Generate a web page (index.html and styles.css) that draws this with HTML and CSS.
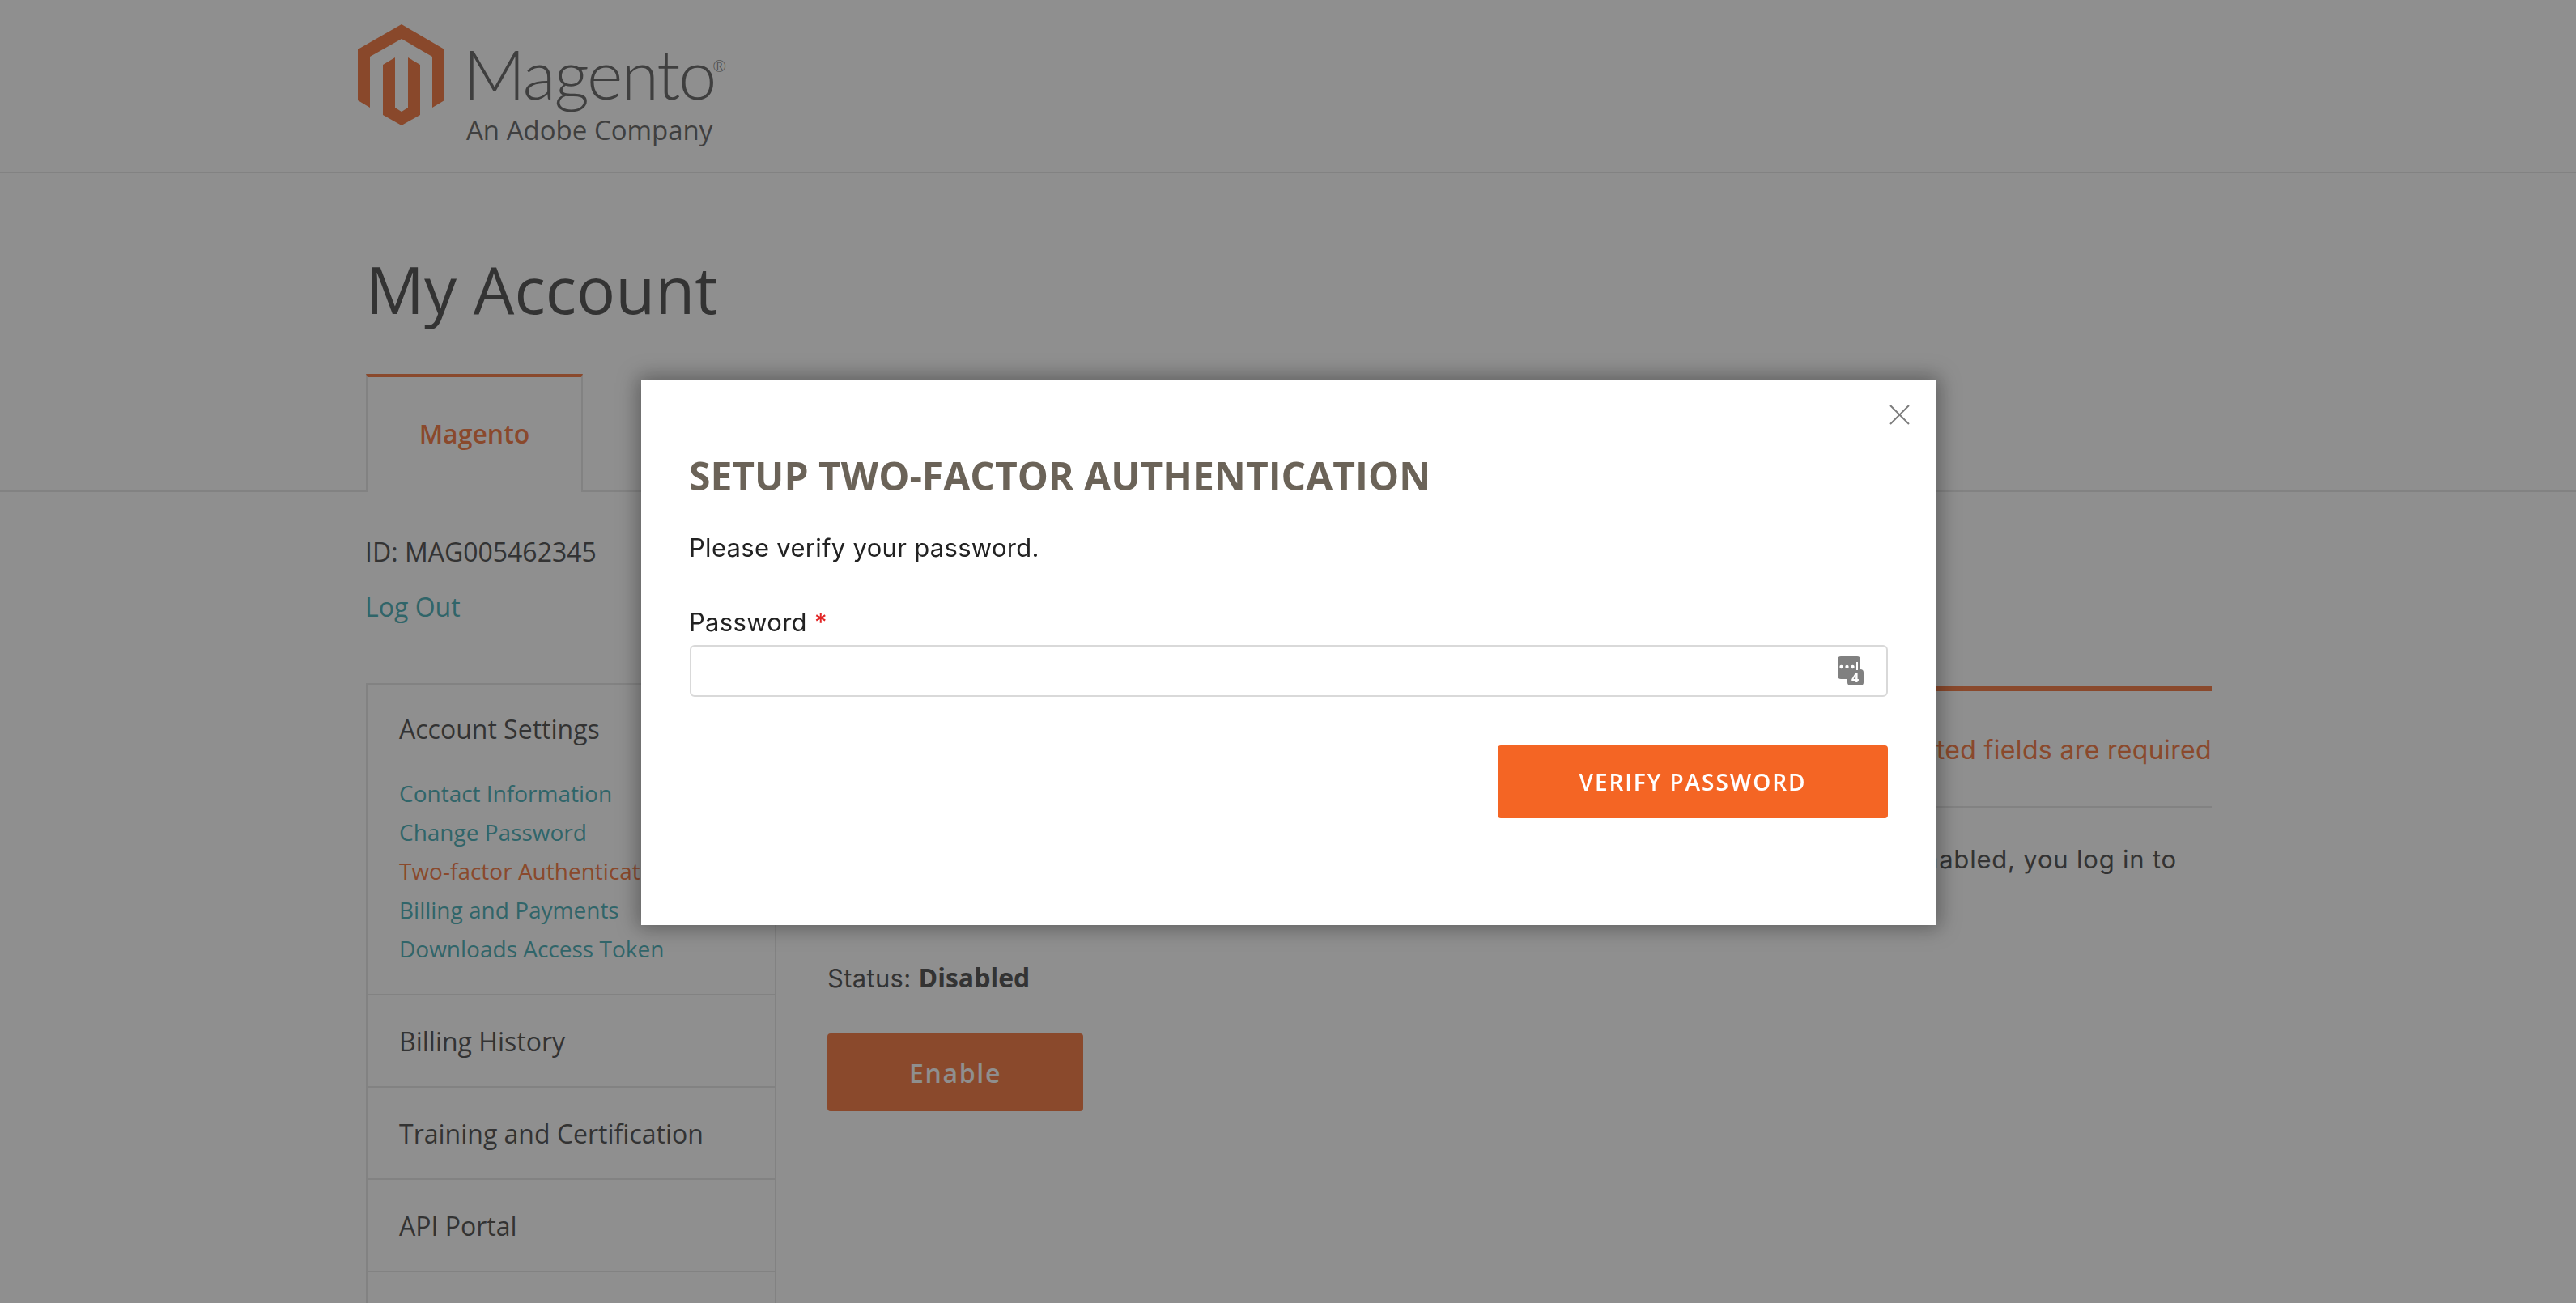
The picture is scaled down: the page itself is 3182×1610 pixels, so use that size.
FILE: index.html
```html
<!DOCTYPE html>
<html lang="en">
<head>
<meta charset="utf-8">
<title>My Account</title>
<link rel="stylesheet" href="styles.css">
</head>
<body>
<header class="site-header">
  <a class="logo" href="#">
    <svg class="logo-mark" width="107" height="125" viewBox="442 30 107 125" aria-hidden="true">
      <path class="mark" d="M496 30 549 61V124L534 133V70L496 48 457 70V133L442 124V61Z"/>
      <path class="mark" d="M488 71V133L496 138 504 133V71L519 80V142L496 155 473 142V80Z"/>
    </svg>
    <span class="logo-text">
      <span class="logo-name">Magento<sup class="logo-reg">®</sup></span>
      <span class="logo-sub">An Adobe Company</span>
    </span>
  </a>
</header>
<main>
  <h1 class="page-title">My Account</h1>
  <nav class="tabs"><a class="tab" href="#">Magento</a></nav>
  <div class="container">
    <p class="account-id">ID: MAG005462345</p>
    <a class="logout" href="#">Log Out</a>
    <div class="columns">
      <aside class="sidebar">
        <section class="side-group">
          <h2 class="side-heading">Account Settings</h2>
          <ul class="side-links">
            <li><a href="#">Contact Information</a></li>
            <li><a href="#">Change Password</a></li>
            <li><a class="current" href="#">Two-factor Authentication</a></li>
            <li><a href="#">Billing and Payments</a></li>
            <li><a href="#">Downloads Access Token</a></li>
          </ul>
        </section>
        <div class="side-row">Billing History</div>
        <div class="side-row">Training and Certification</div>
        <div class="side-row">API Portal</div>
        <div class="side-row"></div>
      </aside>
      <section class="content">
        <div class="content-head">
          <span class="required-note">* Indicated fields are required</span>
        </div>
        <p class="content-text">Two-factor authentication adds a layer of security to your account. When enabled, you log in to</p>
        <p class="status">Status: <b>Disabled</b></p>
        <button class="enable" type="button">Enable</button>
      </section>
    </div>
  </div>
</main>
<div class="overlay"></div>
<div class="modal" role="dialog">
  <button class="close" type="button" aria-label="Close">
    <svg width="25" height="25" viewBox="0 0 25 25" aria-hidden="true"><path d="M1 1 24 24M24 1 1 24"/></svg>
  </button>
  <h2 class="modal-title">Setup Two-Factor Authentication</h2>
  <p class="modal-text">Please verify your password.</p>
  <label class="field-label" for="pw">Password <span class="req">*</span></label>
  <div class="field">
    <input id="pw" class="field-input" type="password">
    <svg class="pw-icon" width="32" height="36" viewBox="0 0 32 36" aria-hidden="true">
      <rect class="ic" x="0" y="0" width="28" height="28" rx="4"/>
      <rect class="ic" x="12" y="16" width="20" height="20" rx="4"/>
      <circle class="dot" cx="4.500" cy="13" r="2.200"/>
      <circle class="dot" cx="11.500" cy="13" r="2.200"/>
      <circle class="dot" cx="18.500" cy="13" r="2.200"/>
      <rect class="dot" x="23" y="7" width="2" height="10"/>
      <text class="ic-num" x="21.500" y="32">4</text>
    </svg>
  </div>
  <div class="modal-actions">
    <button class="verify" type="button">Verify Password</button>
  </div>
</div>
</body>
</html>
```
FILE: styles.css
```css
* { box-sizing: border-box; }
html, body { margin: 0; height: 1610px; overflow: hidden; background: #fff; }
body { font-family: "Open Sans", sans-serif; color: #333; font-size: 32px; }
a { text-decoration: none; }
ul { list-style: none; margin: 0; padding: 0; }
p, h1, h2 { margin: 0; }

.site-header { height: 214px; border-bottom: 2px solid #e3e3e3; padding: 30px 0 0 442px; }
.logo { display: flex; gap: 23px; align-items: flex-start; color: #4e4e4e; }
.logo-mark { display: block; flex: none; }
.mark { fill: #f26322; }
.logo-text { display: flex; flex-direction: column; }
.logo-name { font-family: Lato, sans-serif; font-weight: 300; font-size: 85px; line-height: 92px; letter-spacing: -2.200px; margin-top: 14px; white-space: nowrap; }
.logo-reg { font-size: 20px; font-weight: 300; line-height: 0; position: relative; top: -34px; left: -3px; vertical-align: baseline; letter-spacing: 0; }
.logo-sub { font-size: 33px; line-height: 40px; margin: 5px 0 0 4px; white-space: nowrap; }

.page-title { font-size: 80px; font-weight: 400; line-height: 112px; margin: 87px 0 49px 452px; }
.tabs { display: flex; padding-left: 452px; border-bottom: 2px solid #e3e3e3; height: 146px; }
.tab { width: 268px; height: 146px; padding-bottom: 4px; border: 2px solid #e3e3e3; border-top: 4px solid #f46524; border-bottom: 0; background: #fff; color: #f46524; font-weight: 600; font-size: 32px; display: flex; align-items: center; justify-content: center; }

.container { width: 2280px; margin-left: 452px; }
.account-id { font-size: 32px; line-height: 48px; margin: 50px 0 0 -1px; }
.logout { display: block; font-size: 32px; line-height: 48px; margin: 20px 0 0 -1px; color: #2ea2ab; }
.columns { display: grid; grid-template-columns: 507px 1fr; column-gap: 63px; margin-top: 70px; }

.sidebar { border: 2px solid #e3e3e3; }
.side-group { padding: 31px 39px 32px; border-bottom: 2px solid #e3e3e3; }
.side-heading { font-size: 32px; font-weight: 400; line-height: 48px; margin-bottom: 31px; }
.side-links { font-size: 28px; line-height: 48px; }
.side-links a { color: #2ea2ab; white-space: nowrap; }
.side-links a.current { color: #f46524; }
.side-row { height: 114px; padding: 0 39px; border-bottom: 2px solid #e3e3e3; display: flex; align-items: center; font-size: 32px; }

.content { padding-top: 4px; min-width: 0; }
.content-head { height: 150px; padding-top: 3px; border-top: 6px solid #f46524; border-bottom: 2px solid #e3e3e3; display: flex; align-items: center; justify-content: flex-end; }
.required-note { font-family: Inter, sans-serif; font-size: 32px; letter-spacing: .35px; color: #f46524; }
.content-text { font-family: Inter, sans-serif; font-size: 31px; letter-spacing: .8px; line-height: 48px; margin-top: 40px; padding-right: 43px; text-align: right; white-space: nowrap; }
.status { font-family: Inter, sans-serif; font-size: 31px; letter-spacing: .3px; line-height: 48px; margin-top: 98px; }
.status b { font-family: "Open Sans", sans-serif; font-weight: 700; font-size: 32px; letter-spacing: 0; }
.enable { display: block; width: 316px; height: 96px; margin-top: 44px; border: 0; border-radius: 4px; background: #f46524; color: #fff; font: 600 32px "Open Sans", sans-serif; letter-spacing: 1.700px; }

.overlay { position: fixed; inset: 0; background: rgba(51, 51, 51, .55); }
.modal { position: fixed; left: 792px; top: 469px; width: 1600px; height: 674px; padding: 87px 60px 0; background: #fff; box-shadow: 0 0 24px 4px rgba(0, 0, 0, .35); }
.close { position: absolute; right: 33px; top: 31px; width: 25px; height: 25px; padding: 0; border: 0; background: none; }
.close svg { display: block; }
.close path { stroke: #7d7d7d; stroke-width: 2; fill: none; }
.modal-title { font-size: 48px; font-weight: 700; line-height: 64px; margin-left: -1px; text-transform: uppercase; color: #6b6358; }
.modal-text { font-family: Inter, sans-serif; font-size: 31px; letter-spacing: .3px; line-height: 48px; color: #222; margin: 33px 0 0 -1px; }
.field-label { display: block; font-family: Inter, sans-serif; font-size: 31px; letter-spacing: .3px; line-height: 48px; color: #222; margin: 44px 0 0 -1px; }
.req { color: #e22626; }
.field { position: relative; margin-top: 4px; }
.field-input { display: block; width: 100%; height: 64px; border: 2px solid #d9d9d9; border-radius: 6px; background: #fff; outline: 0; }
.pw-icon { position: absolute; right: 30px; top: 14px; overflow: visible; }
.ic { fill: #808080; }
.dot { fill: #fff; }
.ic-num { font: 700 16px "Open Sans", sans-serif; fill: #fff; text-anchor: middle; }
.modal-actions { display: flex; justify-content: flex-end; margin-top: 60px; }
.verify { width: 482px; height: 90px; border: 0; border-radius: 4px; background: #f46524; color: #fff; font: 600 28px "Open Sans", sans-serif; letter-spacing: 1.950px; text-transform: uppercase; }
```
